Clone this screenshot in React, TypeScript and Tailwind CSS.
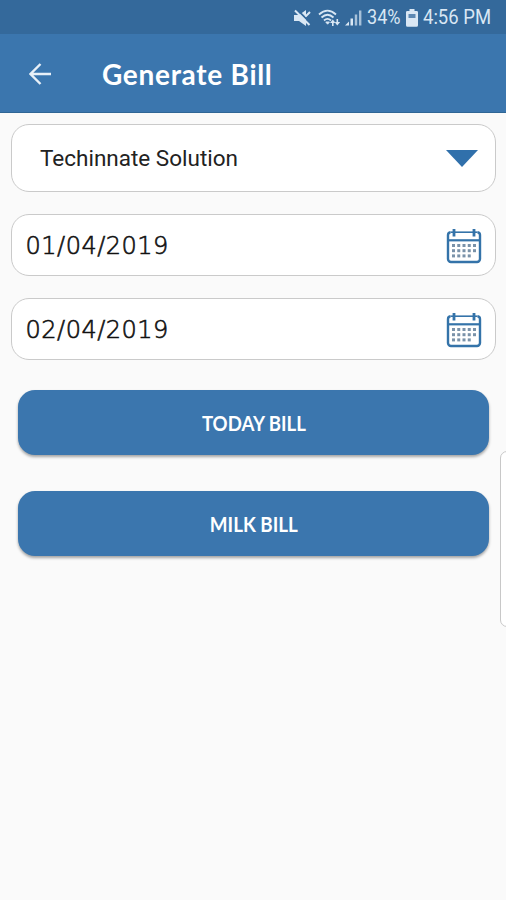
const fieldClass =
  "flex items-center justify-between rounded-[18px] border-[1.5px] border-[#cacaca] bg-white";

const buttonClass =
  "flex h-[65px] w-full items-center justify-center rounded-[17px] bg-[#3b76ae] font-[Lato,sans-serif] text-[20px] font-bold text-white shadow-[0_2px_3px_rgba(0,0,0,0.35)]";

function StatusBar() {
  return (
    <div className="flex h-[34px] items-center bg-[#34699b] pl-[293px] pt-px text-[#d9e7f4]">
      {/* Muted speaker */}
      <svg className="h-[18px] w-[18px] shrink-0" viewBox="0 0 18 18" fill="currentColor">
        <path d="M1 6h5l7-5v16l-7-5H1z" />
        <path d="M4 .5l13 13" stroke="#34699b" strokeWidth="1.8" />
        <path d="M2 1.500l14.500 14.500M12.500 7.500l4.500-4.500" stroke="currentColor" strokeWidth="2" />
      </svg>
      {/* Wi-Fi with transfer arrows */}
      <svg className="ml-[7px] h-[18px] w-[23px] shrink-0" viewBox="0 0 23 18" fill="none" stroke="currentColor" strokeWidth="1.8">
        <path d="M1 5.500Q9.500-2.300 18 5.500M3.500 8.500Q9.500 2.900 15.500 8.500M6 11.500Q9.500 8.200 13 11.500" />
        <path d="M7.800 13h3.600l-1.800 2.200z" fill="currentColor" strokeWidth="1" />
        <path d="M14.800 17v-4M19.300 10v4" strokeWidth="1.6" />
        <path d="M12 14l2.800-3.500 2.800 3.500zM16.500 13l2.800 3.500 2.800-3.500z" fill="currentColor" stroke="none" />
      </svg>
      <svg className="ml-[3px] h-[18px] w-[18px] shrink-0" viewBox="0 0 18 18" fill="currentColor">
        <path d="M1 16.500l4-4v4zM6.500 9.500H9v7H6.500z" />
        <path d="M10.800 5.500h2.400v11h-2.400zM15 1.500h2.400v15H15z" opacity="0.7" />
      </svg>
      <div className="ml-[5px] w-[34px] origin-left scale-x-[0.86] whitespace-nowrap font-[Roboto,sans-serif] text-[21px]">34%</div>
      {/* Battery */}
      <svg className="ml-[5px] h-[18px] w-[12px] shrink-0" viewBox="0 0 12 18">
        <path d="M3.500 0h5v2h2.200a1.300 1.300 0 0 1 1.300 1.300v13a1.500 1.500 0 0 1-1.500 1.500h-9A1.500 1.500 0 0 1 0 16.300v-13A1.300 1.300 0 0 1 1.300 2h2.200z" fill="currentColor" />
        <path d="M2.500 5h7v4h-7z" fill="#5c88b3" />
      </svg>
      <div className="ml-[5px] origin-left scale-x-[0.88] whitespace-nowrap font-[Roboto,sans-serif] text-[21px]">4:56 PM</div>
    </div>
  );
}

function CalendarIcon() {
  const rows = [
    { y: 17.5, dots: 5 },
    { y: 22.7, dots: 5 },
    { y: 27.9, dots: 4 },
  ];
  return (
    <svg className="h-9 w-9" viewBox="0 0 36 36" fill="none" stroke="#3473a9">
      <path d="M4.500 4.200h27" strokeWidth="1.600" />
      <path d="M4.500 4.200a3 3 0 0 0-2.500 3V31a3 3 0 0 0 3 3h26a3 3 0 0 0 3-3V7.200a3 3 0 0 0-2.500-3" strokeWidth="2.400" />
      <path d="M2 12.300h32" strokeWidth="2.200" />
      <path d="M8 1v7.500M28 1v7.500" strokeWidth="2.800" />
      {rows.map((row) =>
        Array.from({ length: row.dots }, (_, i) => (
          <rect key={`${row.y}-${i}`} x={6 + i * 5.25} y={row.y - 1.5} width="3" height="3" fill="#7a92a9" stroke="none" />
        ))
      )}
    </svg>
  );
}

function DateField({ value }: { value: string }) {
  return (
    <div className={`${fieldClass} h-[62px] pl-[13.5px] pr-[13px] pt-0.5`}>
      <span className="font-['DejaVu_Sans_Light','DejaVu_Sans',sans-serif] text-[24px] font-extralight tracking-[0.5px] text-[#111] [-webkit-text-stroke:0.6px_#111]">
        {value}
      </span>
      <CalendarIcon />
    </div>
  );
}

export default function App() {
  return (
    <div className="relative h-[900px] w-[506px] overflow-hidden bg-[#fafafa]">
      <StatusBar />

      <header className="flex h-[79px] items-center border-b border-[#2f6695] bg-[#3b76ae] pl-[29px] pt-px text-white">
        <svg className="h-[22px] w-[22px]" viewBox="0 0 22 22" fill="none" stroke="#e8f0f8" strokeWidth="2.4">
          <path d="M22 11H2M11.500 1L1.500 11l10 10" />
        </svg>
        <h1 className="ml-[51px] whitespace-nowrap font-[Lato,sans-serif] text-[28px] font-bold tracking-[0.7px]">Generate Bill</h1>
      </header>

      <main className="pl-[11px] pr-[10px] pt-[11px]">
        <div className={`${fieldClass} h-[68px] pl-7 pr-[17px]`}>
          <span className="pt-0.5 font-[Roboto,sans-serif] text-[22.5px] text-[#222]">Techinnate Solution</span>
          <svg className="h-[17px] w-8" viewBox="0 0 32 17">
            <path d="M0 0h32L16 17z" fill="#3070ab" />
          </svg>
        </div>

        <div className="mt-[22px] flex flex-col gap-[22px]">
          <DateField value="01/04/2019" />
          <DateField value="02/04/2019" />
        </div>

        <div className="mt-[30px] flex flex-col gap-9 px-[7px]">
          <button className={buttonClass}>
            <span className="scale-x-[0.93]">TODAY BILL</span>
          </button>
          <button className={buttonClass}>
            <span className="scale-x-[0.94]">MILK BILL</span>
          </button>
        </div>
      </main>

      {/* Edge panel handle */}
      <div className="absolute left-[500px] top-[451px] h-[176px] w-5 rounded-[7px] border border-[#c8c8c8] bg-white" />
    </div>
  );
}
